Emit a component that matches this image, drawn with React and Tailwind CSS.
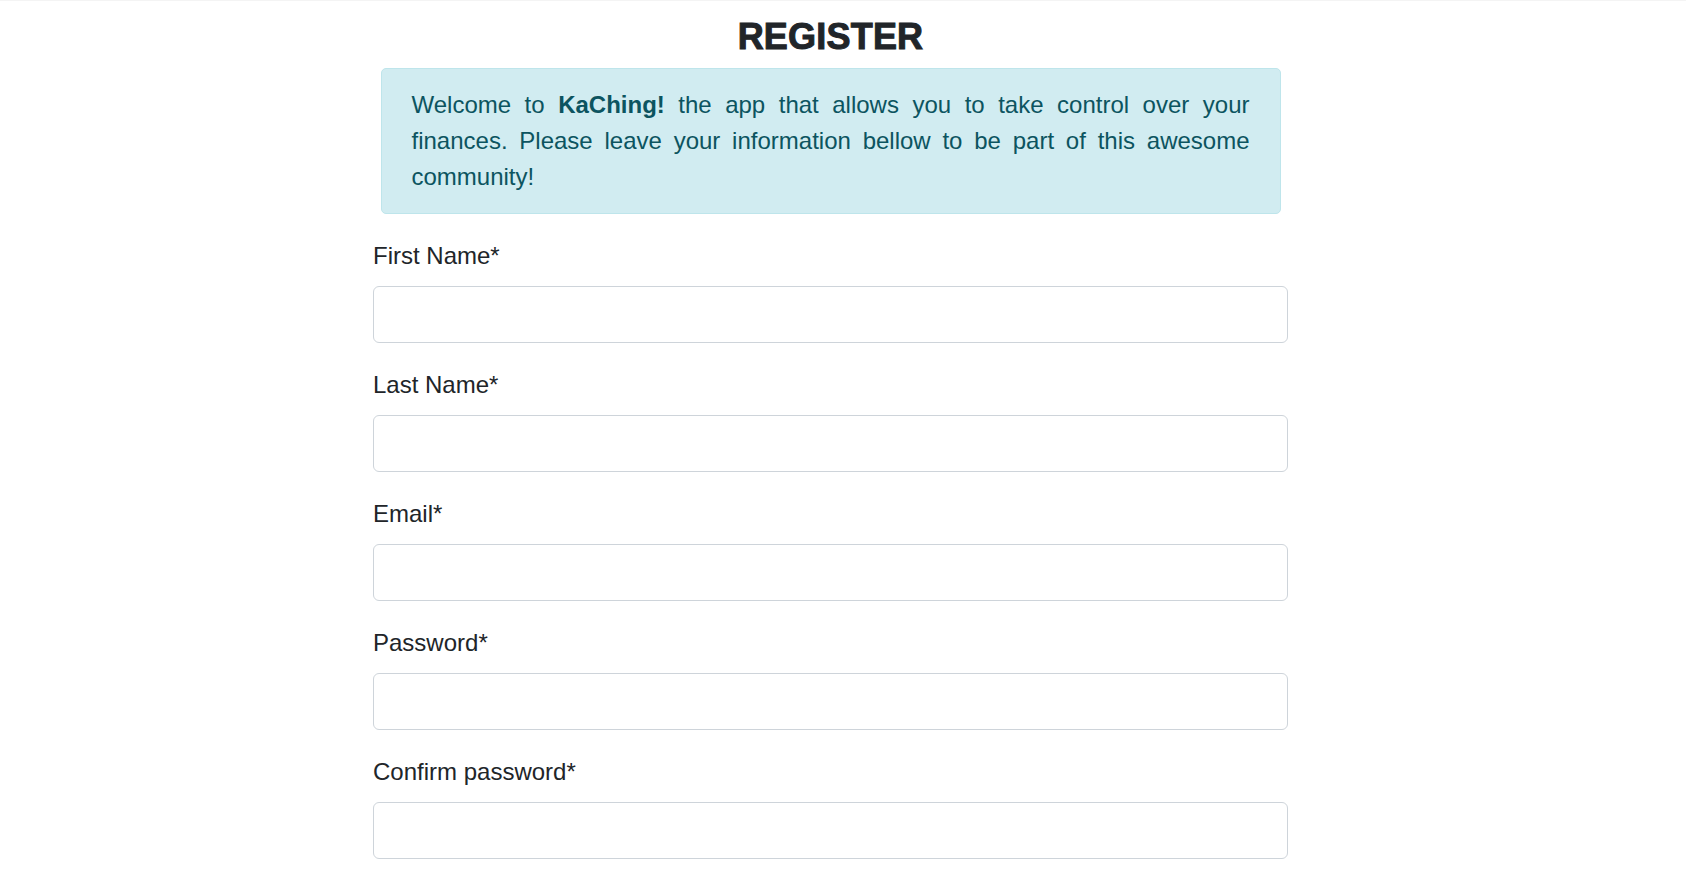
import React from 'react'

const fields = [
  { label: 'First Name*', type: 'text' },
  { label: 'Last Name*', type: 'text' },
  { label: 'Email*', type: 'email' },
  { label: 'Password*', type: 'password' },
  { label: 'Confirm password*', type: 'password' },
]

export default function App() {
  return (
    <div className="min-h-screen bg-white border-t border-[#f4f4f4] font-['Liberation_Sans',Arial,sans-serif] text-[#212529]">
      <div className="flex justify-center pr-[25px]">
        <div className="w-[915px] pt-[18px]">
          {/* Title */}
          <h1 className="text-center text-[36px] leading-[36px] font-bold tracking-[0.2px] [-webkit-text-stroke:1px_#212529]">
            REGISTER
          </h1>

          {/* Intro */}
          <div className="mt-[13px] mx-auto w-[900px] rounded-[5px] border border-[#bee5eb] bg-[#d1ecf1] px-[30px] py-[18px]">
            <p className="text-[24px] leading-[36px] text-[#0c5460] text-justify">
              Welcome to <strong className="font-bold">KaChing!</strong> the app that allows you to take control over your finances. Please leave your information bellow to be part of this awesome community!
            </p>
          </div>

          {/* Form */}
          <form className="mt-[24px]">
            {fields.map((f) => (
              <div key={f.label} className="mb-[24px]">
                <label className="block text-[24px] leading-[36px] mb-[12px]">{f.label}</label>
                <input
                  type={f.type}
                  className="block w-full h-[57px] rounded-[6px] border border-[#ced4da] bg-white px-4 text-[22px] outline-none"
                />
              </div>
            ))}
          </form>
        </div>
      </div>
    </div>
  )
}
